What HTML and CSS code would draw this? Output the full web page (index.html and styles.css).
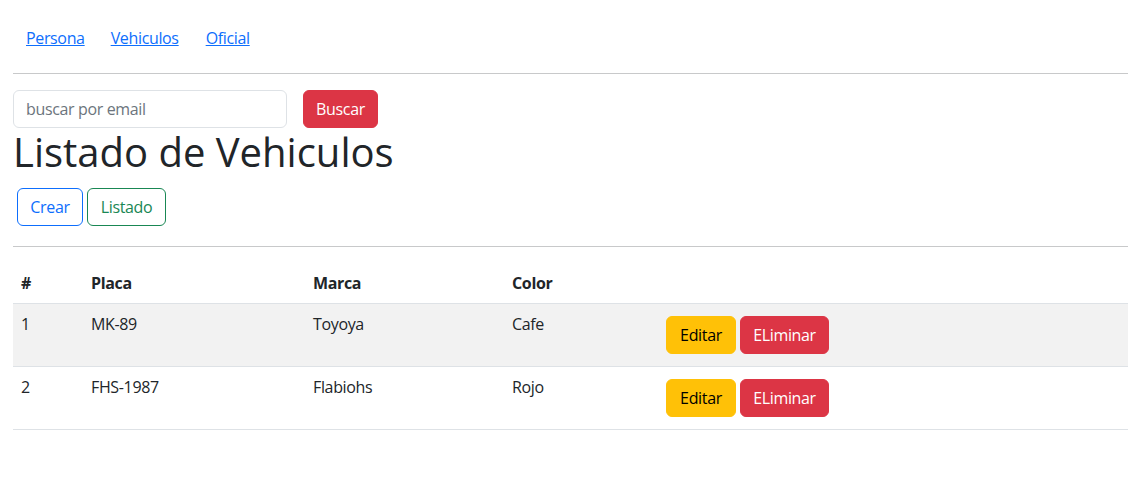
FILE: index.html
```html
<!DOCTYPE html>
<html lang="es">
<head>
<meta charset="utf-8">
<title>Vehiculos</title>
<link rel="stylesheet" href="styles.css">
</head>
<body>
<div class="page">
  <nav class="nav">
    <a href="#">Persona</a>
    <a href="#">Vehiculos</a>
    <a href="#">Oficial</a>
  </nav>
  <hr class="rule">
  <form class="search">
    <input class="input" type="text" placeholder="buscar por email">
    <button class="btn btn-danger" type="button">Buscar</button>
  </form>
  <h1 class="title">Listado de Vehiculos</h1>
  <div class="actions">
    <button class="btn btn-outline-primary" type="button">Crear</button>
    <button class="btn btn-outline-success" type="button">Listado</button>
  </div>
  <hr class="rule">
  <table class="table">
    <thead>
      <tr>
        <th class="c1">#</th>
        <th class="c2">Placa</th>
        <th class="c3">Marca</th>
        <th class="c4">Color</th>
        <th class="c5"></th>
      </tr>
    </thead>
    <tbody>
      <tr class="odd">
        <td>1</td>
        <td>MK-89</td>
        <td>Toyoya</td>
        <td>Cafe</td>
        <td><div class="row-btns"><button class="btn btn-warning" type="button">Editar</button><button class="btn btn-danger" type="button">ELiminar</button></div></td>
      </tr>
      <tr>
        <td>2</td>
        <td>FHS-1987</td>
        <td>Flabiohs</td>
        <td>Rojo</td>
        <td><div class="row-btns"><button class="btn btn-warning" type="button">Editar</button><button class="btn btn-danger" type="button">ELiminar</button></div></td>
      </tr>
    </tbody>
  </table>
</div>
</body>
</html>
```
FILE: styles.css
```css
* { box-sizing: border-box; }
body {
  margin: 0;
  font-family: "Open Sans", "Noto Sans", sans-serif;
  font-size: 16px;
  line-height: 24px;
  color: #212529;
  background: #fff;
  letter-spacing: -0.35px;
}
.page {
  padding: 0 12px 0 13px;
}
.nav {
  display: flex;
  gap: 26px;
  padding: 26px 0 0 13px;
  height: 73px;
}
.nav a {
  color: #0d6efd;
  text-decoration: underline;
}
.nav a:last-child { margin-left: 1px; }
.rule {
  margin: 0;
  border: 0;
  border-top: 1px solid #c8c9ca;
}
.search {
  display: flex;
  gap: 16px;
  margin: 16px 0 0;
}
.input {
  width: 274px;
  height: 38px;
  padding: 6px 12px;
  border: 1px solid #dee2e6;
  border-radius: 6px;
  font: inherit;
  letter-spacing: inherit;
  color: #212529;
}
.input::placeholder { color: #6c757d; }
.btn {
  height: 38px;
  padding: 6px 12px;
  border: 1px solid transparent;
  border-radius: 6px;
  font: inherit;
  letter-spacing: inherit;
  background: transparent;
  cursor: pointer;
}
.btn-danger { background: #dc3545; border-color: #dc3545; color: #fff; }
.btn-warning { background: #ffc107; border-color: #ffc107; color: #000; }
.btn-outline-primary { border-color: #0d6efd; color: #0d6efd; }
.btn-outline-success { border-color: #198754; color: #198754; }
.search .btn { width: 75px; padding: 6px 0; }
.title {
  margin: 0 0 8px;
  font-size: 40px;
  line-height: 48px;
  font-weight: 500;
  letter-spacing: 0;
}
.actions {
  display: flex;
  gap: 4px;
  padding: 4px 0 4px 4px;
  margin-bottom: 16px;
}
.actions .btn:first-child { width: 66px; padding: 6px 0; }
.actions .btn:last-child { width: 79px; padding: 6px 0; }
.table {
  width: 100%;
  margin-top: 16px;
  border-collapse: collapse;
}
.table th, .table td {
  padding: 8px;
  text-align: left;
  vertical-align: top;
  border-bottom: 1px solid #dee2e6;
}
.table th { font-weight: 700; }
.c1 { width: 70px; }
.c2 { width: 222px; }
.c3 { width: 199px; }
.c4 { width: 153px; }
.table tr.odd td { background: #f2f2f2; }
.row-btns {
  display: flex;
  gap: 4px;
  padding: 4px 0 4px 1px;
}
.row-btns .btn-warning { width: 70px; padding: 6px 0; }
.row-btns .btn-danger { width: 89px; padding: 6px 0; }
```
